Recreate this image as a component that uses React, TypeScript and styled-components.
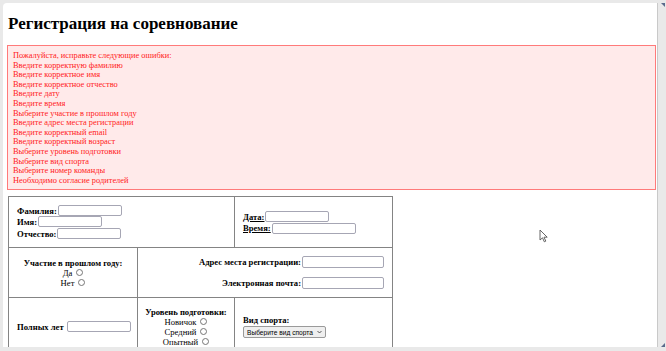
import React from "react";
import styled, { createGlobalStyle } from "styled-components";

const GlobalStyle = createGlobalStyle`
  html, body {
    margin: 0;
    padding: 0;
    background: #e9e9e9;
    font-family: "Liberation Serif", "Times New Roman", serif;
  }
`;

const Frame = styled.div`
  display: flex;
  height: 351px;
  padding: 3px 0 0 3px;
  box-sizing: border-box;
  overflow: hidden;
`;

const Panel = styled.div`
  position: relative;
  width: 655px;
  height: 344px;
  background: #ffffff;
  border-right: 1px solid #c9c9c9;
  border-top-left-radius: 4px;
  overflow: hidden;
  padding: 0 1px 0 4px;
  box-sizing: border-box;
`;

const ScrollStrip = styled.div`
  flex: 1;
  height: 344px;
  display: flex;
  flex-direction: column;
  justify-content: space-between;
  padding: 0 1px;
`;

const Arrow = styled.div<{ $down?: boolean }>`
  width: 0;
  height: 0;
  border-left: 4px solid transparent;
  border-${(p) => (p.$down ? "bottom" : "top")}: 4px solid #5a6b8c;
  align-self: flex-end;
`;

const Title = styled.h1`
  margin: 9px 0 9px 1px;
  font-size: 17px;
  line-height: 24px;
  font-weight: bold;
  color: #000;
`;

const ErrorBox = styled.div`
  border: 1px solid #ff7a7a;
  background: #ffeaea;
  color: #ff1a1a;
  font-size: 8.4px;
  line-height: 9.6px;
  padding: 5px 5px 4px 5px;
`;

const FormTable = styled.table`
  margin: 6px 0 0 1px;
  border-collapse: collapse;
  table-layout: fixed;
  width: 384px;
  font-size: 8.6px;
  td {
    border: 1px solid #848484;
    padding: 0 8px;
    vertical-align: middle;
  }
`;

const Cell = styled.td<{ $align?: string }>`
  text-align: ${(p) => p.$align || "left"};
`;

const Row = styled.tr<{ $h: number }>`
  height: ${(p) => p.$h}px;
`;

const Line = styled.div<{ $h?: number; $justify?: string }>`
  display: flex;
  align-items: center;
  justify-content: ${(p) => p.$justify || "flex-start"};
  height: ${(p) => p.$h || 11}px;
`;

const Label = styled.label<{ $under?: boolean }>`
  font-weight: bold;
  text-decoration: ${(p) => (p.$under ? "underline" : "none")};
  white-space: nowrap;
`;

const TextInput = styled.input<{ $w?: number }>`
  width: ${(p) => p.$w || 64}px;
  height: 11px;
  box-sizing: border-box;
  border: 1px solid #a6a6b4;
  border-radius: 2px;
  background: #fff;
  padding: 0;
  margin: 0 0 0 1px;
  font-size: 8px;
`;

const Radio = styled.input.attrs({ type: "radio" })`
  appearance: none;
  width: 7px;
  height: 7px;
  box-sizing: border-box;
  border: 1px solid #767676;
  border-radius: 50%;
  margin: 0 0 0 4px;
  background: #fff;
`;

const Plain = styled.span`
  white-space: nowrap;
`;

const SelectWrap = styled.span`
  position: relative;
  display: inline-block;
  margin-top: 1px;
`;

const Select = styled.select`
  appearance: none;
  width: 83px;
  height: 12px;
  box-sizing: border-box;
  border: 1px solid #9a9a9a;
  border-radius: 2px;
  background: #efefef;
  font-family: "Liberation Sans", Arial, sans-serif;
  font-size: 6.6px;
  padding: 0 0 0 3px;
  color: #000;
`;

const Chevron = styled.svg`
  position: absolute;
  right: 4px;
  top: 4px;
  pointer-events: none;
`;

const Cursor = styled.svg`
  position: absolute;
  left: 536px;
  top: 226px;
`;

const errors = [
  "Пожалуйста, исправьте следующие ошибки:",
  "Введите корректную фамилию",
  "Введите корректное имя",
  "Введите корректное отчество",
  "Введите дату",
  "Введите время",
  "Выберите участие в прошлом году",
  "Введите адрес места регистрации",
  "Введите корректный email",
  "Введите корректный возраст",
  "Выберите уровень подготовки",
  "Выберите вид спорта",
  "Выберите номер команды",
  "Необходимо согласие родителей",
];

function RadioLine({ label, name }: { label: string; name: string }) {
  return (
    <Line $h={10} $justify="center">
      <Plain>{label}</Plain>
      <Radio name={name} />
    </Line>
  );
}

export default function App() {
  return (
    <>
      <GlobalStyle />
      <Frame>
        <Panel>
          <Title>Регистрация на соревнование</Title>
          <ErrorBox>
            {errors.map((e) => (
              <div key={e}>{e}</div>
            ))}
          </ErrorBox>
          <FormTable>
            <colgroup>
              <col style={{ width: 129 }} />
              <col style={{ width: 97 }} />
              <col style={{ width: 158 }} />
            </colgroup>
            <tbody>
              <Row $h={51}>
                <Cell colSpan={2}>
                  <Line>
                    <Label>Фамилия:</Label>
                    <TextInput />
                  </Line>
                  <Line $h={11.5}>
                    <Label>Имя:</Label>
                    <TextInput />
                  </Line>
                  <Line $h={12}>
                    <Label>Отчество:</Label>
                    <TextInput />
                  </Line>
                </Cell>
                <Cell>
                  <Line $h={12}>
                    <Label $under>Дата:</Label>
                    <TextInput />
                  </Line>
                  <Line $h={11}>
                    <Label $under>Время:</Label>
                    <TextInput $w={84} />
                  </Line>
                </Cell>
              </Row>
              <Row $h={50}>
                <Cell $align="center">
                  <Line $h={10} $justify="center">
                    <Label>Участие в прошлом году:</Label>
                  </Line>
                  <RadioLine label="Да" name="last" />
                  <RadioLine label="Нет" name="last" />
                </Cell>
                <Cell colSpan={2} $align="right">
                  <Line $h={21} $justify="flex-end">
                    <Label>Адрес места регистрации:</Label>
                    <TextInput $w={82} style={{ height: 12 }} />
                  </Line>
                  <Line $h={21} $justify="flex-end">
                    <Label>Электронная почта:</Label>
                    <TextInput $w={82} style={{ height: 12 }} />
                  </Line>
                </Cell>
              </Row>
              <Row $h={58}>
                <Cell>
                  <Line $h={12}>
                    <Label>Полных лет</Label>
                    <TextInput style={{ marginLeft: 3 }} />
                  </Line>
                </Cell>
                <Cell $align="center">
                  <Line $h={10} $justify="center">
                    <Label>Уровень подготовки:</Label>
                  </Line>
                  <RadioLine label="Новичок" name="level" />
                  <RadioLine label="Средний" name="level" />
                  <RadioLine label="Опытный" name="level" />
                </Cell>
                <Cell>
                  <Line $h={10}>
                    <Label>Вид спорта:</Label>
                  </Line>
                  <SelectWrap>
                    <Select defaultValue="">
                      <option value="">Выберите вид спорта</option>
                    </Select>
                    <Chevron width="5" height="4" viewBox="0 0 5 4">
                      <path d="M0.5 1 L2.5 3 L4.5 1" fill="none" stroke="#333" strokeWidth="0.8" />
                    </Chevron>
                  </SelectWrap>
                </Cell>
              </Row>
            </tbody>
          </FormTable>
          <Cursor width="9" height="14" viewBox="0 0 9 14">
            <path d="M1 1 L1 11 L3.5 8.8 L5.3 12.8 L6.8 12.1 L5 8.2 L8.2 8.2 Z" fill="#fff" stroke="#555" strokeWidth="0.9" strokeLinejoin="round" />
          </Cursor>
        </Panel>
        <ScrollStrip>
          <Arrow />
          <Arrow $down />
        </ScrollStrip>
      </Frame>
    </>
  );
}
